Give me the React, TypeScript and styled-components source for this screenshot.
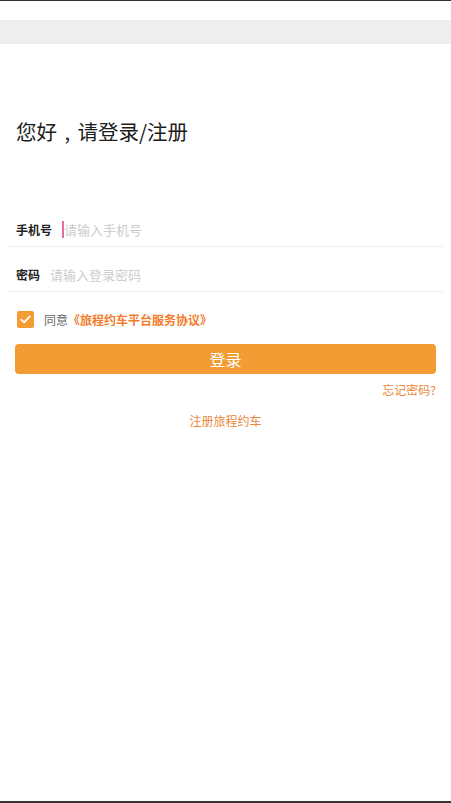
import React from "react";
import styled, { createGlobalStyle } from "styled-components";

const GlobalStyle = createGlobalStyle`
  html, body {
    margin: 0;
    padding: 0;
    background: #ffffff;
  }
  body {
    font-family: "Noto Sans CJK SC", "Noto Sans", sans-serif;
  }
  * { box-sizing: border-box; }
`;

const Screen = styled.div`
  width: 451px;
  height: 803px;
  display: flex;
  flex-direction: column;
  border-top: 1px solid #333333;
  border-bottom: 2px solid #333333;
  background: #ffffff;
  overflow: hidden;
`;

const StatusSpace = styled.div`
  height: 19px;
  flex-shrink: 0;
`;

const NavBand = styled.div`
  height: 24px;
  flex-shrink: 0;
  background: #eeeeee;
`;

const Content = styled.main`
  display: flex;
  flex-direction: column;
  padding-top: 73px;
`;

const Title = styled.h1`
  margin: 0 0 57px 16px;
  font-size: 20.5px;
  line-height: 28px;
  font-weight: 400;
  color: #1c1c1c;
`;

const Punct = styled.span`
  display: inline-block;
  width: 1em;
  text-align: center;
`;

const FieldRow = styled.label`
  display: flex;
  align-items: center;
  height: 45px;
  padding: 10px 0 0 8px;
  margin: 0 8px;
  border-bottom: 1px solid #eeeeee;
`;

const FieldInner = styled.div`
  display: flex;
  align-items: center;
  height: 34px;
  width: 100%;
`;

const FieldLabel = styled.span`
  font-size: 12px;
  font-weight: 700;
  color: #222222;
  margin-right: 10px;
  white-space: nowrap;
`;

const Caret = styled.span`
  display: inline-block;
  width: 2px;
  height: 17px;
  background: #ec6a9a;
  flex-shrink: 0;
`;

const Input = styled.input`
  flex: 1;
  border: none;
  outline: none;
  padding: 0;
  margin: 0;
  background: transparent;
  font-family: "Noto Sans CJK SC", "Noto Sans", sans-serif;
  font-size: 13px;
  color: #333333;
  &::placeholder {
    color: #cccccc;
  }
`;

const AgreeRow = styled.div`
  display: flex;
  align-items: center;
  height: 20px;
  margin: 17px 0 0 17px;
`;

const CheckBox = styled.span`
  width: 17px;
  height: 17px;
  border-radius: 2px;
  background: #f29c33;
  display: flex;
  align-items: center;
  justify-content: center;
  margin-right: 10px;
  flex-shrink: 0;
`;

const AgreeText = styled.span`
  font-size: 12px;
  color: #666666;
`;

const AgreeLink = styled.span`
  color: #f47b2a;
  font-weight: 700;
`;

const LoginButton = styled.button`
  margin: 15px 15px 0 15px;
  height: 30px;
  border: none;
  border-radius: 4px;
  background: #f29c33;
  color: #ffffff;
  font-family: "Noto Sans CJK SC", "Noto Sans", sans-serif;
  font-size: 16px;
  line-height: 30px;
  padding: 0;
`;

const ForgotRow = styled.div`
  display: flex;
  justify-content: flex-end;
  margin: 8px 15px 0 15px;
`;

const OrangeLink = styled.span`
  font-size: 12px;
  line-height: 16px;
  color: #eb873a;
`;

const RegisterRow = styled.div`
  display: flex;
  justify-content: center;
  margin-top: 15px;
`;

export default function App() {
  return (
    <>
      <GlobalStyle />
      <Screen>
        <StatusSpace />
        <NavBand />
        <Content>
          <Title>
            您好<Punct>,</Punct>请登录/注册
          </Title>
          <FieldRow>
            <FieldInner>
              <FieldLabel>手机号</FieldLabel>
              <Caret />
              <Input type="tel" placeholder="请输入手机号" />
            </FieldInner>
          </FieldRow>
          <FieldRow>
            <FieldInner>
              <FieldLabel>密码</FieldLabel>
              <Input type="password" placeholder="请输入登录密码" />
            </FieldInner>
          </FieldRow>
          <AgreeRow>
            <CheckBox>
              <svg width="11" height="9" viewBox="0 0 11 9" fill="none">
                <path d="M1.2 4.6 L4.2 7.4 L9.8 1.4" stroke="#ffffff" strokeWidth="1.8" strokeLinecap="round" strokeLinejoin="round" />
              </svg>
            </CheckBox>
            <AgreeText>
              同意<AgreeLink>《旅程约车平台服务协议》</AgreeLink>
            </AgreeText>
          </AgreeRow>
          <LoginButton type="button">登录</LoginButton>
          <ForgotRow>
            <OrangeLink>忘记密码?</OrangeLink>
          </ForgotRow>
          <RegisterRow>
            <OrangeLink>注册旅程约车</OrangeLink>
          </RegisterRow>
        </Content>
      </Screen>
    </>
  );
}
